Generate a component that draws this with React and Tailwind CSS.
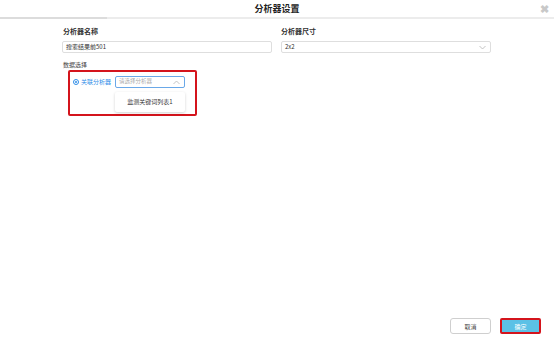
import React from 'react';

const font = { fontFamily: '"Noto Sans CJK SC", "Liberation Sans", sans-serif' };

const Chevron = ({ up = false, className = '' }) => (
  <svg className={className} width="7" height="5" viewBox="0 0 7 5" fill="none">
    <path d={up ? 'M0.5 4L3.5 1L6.5 4' : 'M0.5 1L3.5 4L6.5 1'} stroke="#b5b5b5" strokeWidth="0.8" />
  </svg>
);

const App = () => {
  return (
    <div className="w-[554px] h-[340px] bg-white flex flex-col text-[#333]" style={font}>
      {/* Header */}
      <div className="relative h-[17px] flex items-center justify-center">
        <span className="text-[9px] font-bold text-[#222] leading-none">分析器设置</span>
        <span className="absolute right-[5px] top-[3px] text-[#c8c8c8] text-[11px] leading-none font-bold">✖</span>
      </div>
      <div className="flex h-[2px]">
        <div className="w-[107px] bg-[#dcdcdc]" />
        <div className="flex-1 bg-[#ececec]" />
      </div>

      {/* Body */}
      <div className="flex-1 pl-[62px] pr-[63px] pt-[7px]">
        <div className="grid grid-cols-2 gap-x-[9px]">
          <div className="flex flex-col">
            <span className="text-[7px] font-bold leading-[10px] pl-[1px]">分析器名称</span>
            <div className="mt-[5px] h-[12px] border border-[#dedede] rounded-[2px] flex items-center px-[3px]">
              <span className="text-[6px] leading-none text-[#333]">搜索结果前501</span>
            </div>
          </div>
          <div className="flex flex-col">
            <span className="text-[7px] font-bold leading-[10px]">分析器尺寸</span>
            <div className="mt-[5px] h-[12px] border border-[#dedede] rounded-[2px] flex items-center justify-between pl-[3px] pr-[4px]">
              <span className="text-[6px] leading-none text-[#333]">2x2</span>
              <Chevron />
            </div>
          </div>
        </div>

        <div className="mt-[7px] pl-[1px] text-[6px] leading-[9px] text-[#444]">数据选择</div>

        <div className="mt-[1px] ml-[6px] w-[129px] h-[46px] border-2 border-[#d4141c] rounded-[2px] pl-[2px] pt-[4px]">
          <div className="flex items-start">
            <div className="flex items-center h-[12px]">
              <span className="w-[6px] h-[6px] rounded-full border-[1.5px] border-[#2e8de8] flex items-center justify-center ml-[1px]">
                <span className="w-[2px] h-[2px] rounded-full bg-[#2e8de8]" />
              </span>
              <span className="ml-[2px] text-[6px] text-[#2e8de8] leading-none">关联分析器</span>
            </div>
            <div className="ml-[4px] flex flex-col w-[70px]">
              <div className="h-[12px] border border-[#6aa8e8] rounded-[2px] flex items-center justify-between pl-[3px] pr-[4px]">
                <span className="text-[5.5px] text-[#aaa] leading-none">请选择分析器</span>
                <Chevron up />
              </div>
              <div className="mt-[4px] h-[20px] bg-white rounded-[2px] shadow-[0_1px_3px_rgba(0,0,0,0.18)] flex items-center justify-center">
                <span className="text-[6px] text-[#333] leading-none">监测关键词列表1</span>
              </div>
            </div>
          </div>
        </div>
      </div>

      {/* Footer */}
      <div className="flex justify-end items-center gap-[9px] pr-[13px] pb-[6px]">
        <button className="w-[41px] h-[16px] border border-[#cfcfcf] rounded-[3px] bg-white text-[6px] text-[#444]">
          取消
        </button>
        <button className="w-[41px] h-[16px] border-2 border-[#d4141c] rounded-[2px] bg-[#5bc1e6] text-[6px] text-white">
          确定
        </button>
      </div>
    </div>
  );
};

export default App;
